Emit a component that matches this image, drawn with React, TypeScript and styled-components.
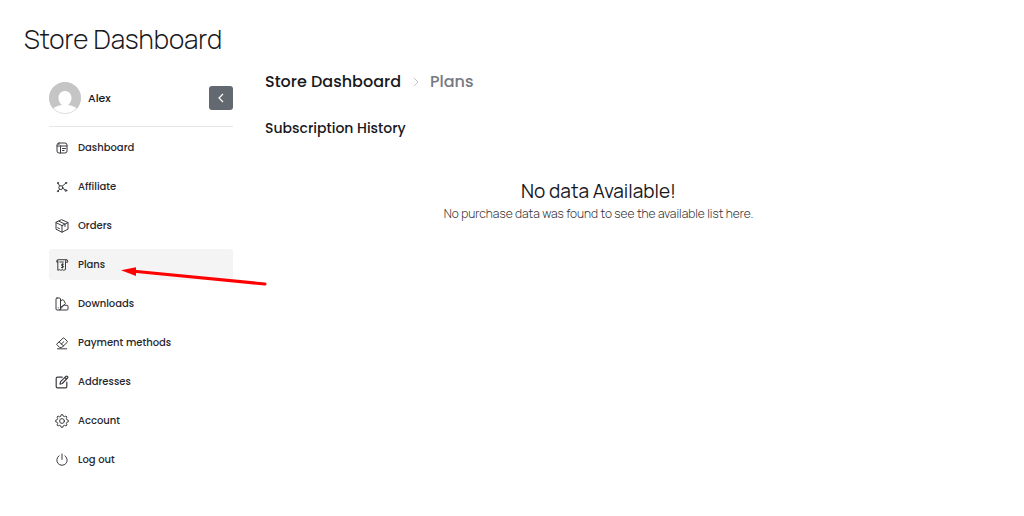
import React from "react";
import styled, { createGlobalStyle } from "styled-components";

const GlobalStyle = createGlobalStyle`
  *, *::before, *::after { box-sizing: border-box; }
  body {
    margin: 0;
    background: #fff;
    color: #18181d;
    font-family: Poppins, Inter, "Liberation Sans", sans-serif;
  }
  h1, h2, h3, p, ul, ol { margin: 0; padding: 0; }
  ul, ol { list-style: none; }
`;

const Page = styled.div`
  padding: 20px 24px 24px;
`;

const PageTitle = styled.h1`
  font-family: Manrope, Inter, sans-serif;
  font-size: 26px;
  font-weight: 300;
  line-height: 38px;
`;

const Layout = styled.div`
  display: grid;
  grid-template-columns: 184px minmax(0, 1fr);
  column-gap: 32px;
  padding: 12px 68px 0 25px;
`;

const Sidebar = styled.aside`
  padding-top: 12px;
`;

const Profile = styled.div`
  display: flex;
  align-items: center;
  gap: 7px;
  padding-bottom: 12px;
  border-bottom: 1px solid #e6e7e9;
`;

const Avatar = styled.svg`
  width: 32px;
  height: 32px;
  flex: none;
`;

const UserName = styled.span`
  flex: 1;
  font-size: 11px;
  font-weight: 500;
  line-height: 16px;
`;

const CollapseButton = styled.button`
  display: flex;
  align-items: center;
  justify-content: center;
  width: 24px;
  height: 24px;
  padding: 0;
  border: 0;
  border-radius: 3px;
  background: #626971;
  color: #fff;
  cursor: pointer;
`;

const Menu = styled.ul`
  display: flex;
  flex-direction: column;
  gap: 8px;
  padding-top: 5px;
`;

const MenuItem = styled.li`
  position: relative;
`;

const MenuLink = styled.a<{ $active?: boolean }>`
  display: flex;
  align-items: center;
  gap: 9px;
  height: 31px;
  padding: 0 6px;
  border-radius: 3px;
  background: ${(p) => (p.$active ? "#f4f4f4" : "transparent")};
  color: #27272c;
  font-size: 10px;
  font-weight: 500;
  line-height: 16px;
  text-decoration: none;
`;

const MenuIcon = styled.svg`
  width: 14px;
  height: 14px;
  flex: none;
  fill: none;
  stroke: #3b3b40;
  stroke-width: 1;
  stroke-linecap: round;
  stroke-linejoin: round;
`;

const Pointer = styled.svg`
  position: absolute;
  left: 71px;
  top: 15px;
  width: 148px;
  height: 24px;
  pointer-events: none;
`;

const Main = styled.main`
  min-width: 0;
`;

const Crumbs = styled.ol`
  display: flex;
  align-items: center;
  font-size: 16px;
  font-weight: 500;
  line-height: 24px;
`;

const Crumb = styled.li<{ $muted?: boolean }>`
  display: flex;
  align-items: center;
  color: ${(p) => (p.$muted ? "#777980" : "inherit")};
`;

const CrumbLink = styled.a`
  color: inherit;
  text-decoration: none;
`;

const CrumbArrow = styled.svg`
  width: 6px;
  height: 10px;
  margin: 0 11px 0 12px;
`;

const SectionTitle = styled.h2`
  margin-top: 22px;
  font-size: 14px;
  font-weight: 500;
  line-height: 24px;
`;

const EmptyState = styled.section`
  margin-top: 37px;
  font-family: Manrope, Inter, sans-serif;
  text-align: center;
`;

const EmptyTitle = styled.h3`
  font-size: 19px;
  font-weight: 400;
  line-height: 28px;
`;

const EmptyText = styled.p`
  color: #303035;
  font-size: 12px;
  font-weight: 350;
  line-height: 18px;
`;

const items: { label: string; active?: boolean; icon: React.ReactNode }[] = [
  {
    label: "Dashboard",
    icon: (
      <>
        <rect x="2" y="2" width="10" height="10" rx="2" />
        <path d="M2 5h10M5.5 5v7M7.5 7.5h3M7.5 9.5h1.500M3.800 3.500h.2" />
      </>
    ),
  },
  {
    label: "Affiliate",
    icon: (
      <>
        <circle cx="5.8" cy="7.6" r="2" />
        <path d="M4.600 6 3.200 3.400M7.200 6.200l3.600-3M4.600 9.200l-1.400 1.600M7.800 8.300l2.300 1.500" />
        <circle cx="2.9" cy="3" r=".6" />
        <circle cx="11.1" cy="2.9" r=".6" />
        <circle cx="2.9" cy="11.2" r=".6" />
        <circle cx="10.9" cy="10.5" r=".9" />
      </>
    ),
  },
  {
    label: "Orders",
    icon: (
      <>
        <path d="M7 .8 13 3.600v6.600L7 13.200 1 10.200V3.600z" />
        <path d="M1 3.600 7 6.600l6-3M7 6.600v6.600M4 2.200l6 2.900v2.400M2.800 8.800l1.600.8" />
      </>
    ),
  },
  {
    label: "Plans",
    active: true,
    icon: (
      <>
        <path d="M2.800 4.200H1.800V3q0-1.300 1.300-1.300h8.400q1.200 0 1.200 1.300v1.200h-2.200M2.800 2.500v9.800l1.600-.7 1.400.7 1.400-.7 1.400.7 1.900-.7V3.200q0-1.400 1-1.500" />
        <path d="M4.800 4h3.600M8.500 6.200H7.300q-.9 0-.9.8t.9.8h.4q.9 0 .9.8t-.9.8H6.400M7.500 5.600v4.400" />
      </>
    ),
  },
  {
    label: "Downloads",
    icon: (
      <>
        <rect x="1" y="1" width="4.500" height="12" rx="1" />
        <path d="m5.500 4 2-1.200q.7-.3 1.100.4l1.700 2.900q.3.700-.3 1.100L5.500 10.300M9.800 8.300h2.300q.9 0 .9.9v2.900q0 .9-.9.9H4.500l5-5.400M3.200 10.800h.1" />
      </>
    ),
  },
  {
    label: "Payment methods",
    icon: (
      <>
        <path d="M1.800 8.100 8 2.200q.6-.5 1.200 0l3 3q.5.600 0 1.200l-5.400 5H5z" />
        <path d="m4.200 6 4.500 4M6.200 8.200l2.600-2.500M2.500 12.800h9.200" />
      </>
    ),
  },
  {
    label: "Addresses",
    icon: (
      <g strokeWidth="1.2">
        <path d="M7.200 2.200H2.500Q1.200 2.200 1.200 3.500v8q0 1.300 1.300 1.300h8q1.300 0 1.300-1.300V7.200" />
        <path d="m5 9.200.6-2.500 5.300-5.300q.7-.6 1.500.1t.1 1.500L7.300 8.500zM9.900 2.500l1.700 1.700" />
      </g>
    ),
  },
  {
    label: "Account",
    icon: (
      <>
        <path d="m5.800 2.100.4-1.400h1.600l.4 1.400 1.400.6 1.300-.7 1.100 1.100-.7 1.300.6 1.400 1.400.4v1.600l-1.400.4-.6 1.400.7 1.300-1.100 1.100-1.300-.7-1.400.6-.4 1.400H6.200l-.4-1.400-1.400-.6-1.300.7L2 10.900l.7-1.300-.6-1.400-1.400-.4V6.200l1.400-.4.6-1.400L2 3.100 3.100 2l1.300.7z" />
        <circle cx="7" cy="7" r="2.400" />
      </>
    ),
  },
  {
    label: "Log out",
    icon: <path d="M7 1v5.400M4 2.800a5.200 5.200 0 1 0 6 0" />,
  },
];

export default function App() {
  return (
    <>
      <GlobalStyle />
      <Page>
        <PageTitle>Store Dashboard</PageTitle>
        <Layout>
          <Sidebar>
            <Profile>
              <Avatar viewBox="0 0 32 32" aria-hidden="true">
                <defs>
                  <clipPath id="avatar-clip">
                    <circle cx="16" cy="16" r="16" />
                  </clipPath>
                </defs>
                <g clipPath="url(#avatar-clip)">
                  <rect width="32" height="32" fill="#c5c5c5" />
                  <path
                    d="M16 9c-4 0-6.500 3-6.500 7 0 3 1.500 5.500 3.500 7-4 .5-7.500 2-9 4v5h24v-5c-1.500-2-5-3.500-9-4 2-1.500 3.500-4 3.500-7 0-4-2.500-7-6.500-7z"
                    fill="#fff"
                  />
                  <circle cx="16" cy="16" r="15.700" fill="none" stroke="#c9c9c9" strokeWidth=".6" />
                </g>
              </Avatar>
              <UserName>Alex</UserName>
              <CollapseButton type="button" aria-label="Collapse menu">
                <svg width="6" height="10" viewBox="0 0 6 10" fill="none" stroke="currentColor" strokeWidth="1.200">
                  <path d="M5 1 1 5l4 4" />
                </svg>
              </CollapseButton>
            </Profile>
            <nav aria-label="Store dashboard">
              <Menu>
                {items.map(({ label, active, icon }) => (
                  <MenuItem key={label}>
                    <MenuLink href="#" $active={active} aria-current={active ? "page" : undefined}>
                      <MenuIcon viewBox="0 0 14 14" aria-hidden="true">
                        {icon}
                      </MenuIcon>
                      {label}
                    </MenuLink>
                    {active && (
                      <Pointer viewBox="0 0 148 24" aria-hidden="true">
                        <path d="M14 7.300 145 20" stroke="#f00" strokeWidth="3" strokeLinecap="round" />
                        <path d="M1 6.300 16 3.200v8.800z" fill="#f00" />
                      </Pointer>
                    )}
                  </MenuItem>
                ))}
              </Menu>
            </nav>
          </Sidebar>
          <Main>
            <nav aria-label="Breadcrumb">
              <Crumbs>
                <Crumb>
                  <CrumbLink href="#">Store Dashboard</CrumbLink>
                </Crumb>
                <Crumb $muted aria-current="page">
                  <CrumbArrow viewBox="0 0 6 10" fill="none" stroke="#c3c5c9" aria-hidden="true">
                    <path d="m1 1 4 4-4 4" />
                  </CrumbArrow>
                  Plans
                </Crumb>
              </Crumbs>
            </nav>
            <SectionTitle>Subscription History</SectionTitle>
            <EmptyState>
              <EmptyTitle>No data Available!</EmptyTitle>
              <EmptyText>No purchase data was found to see the available list here.</EmptyText>
            </EmptyState>
          </Main>
        </Layout>
      </Page>
    </>
  );
}
